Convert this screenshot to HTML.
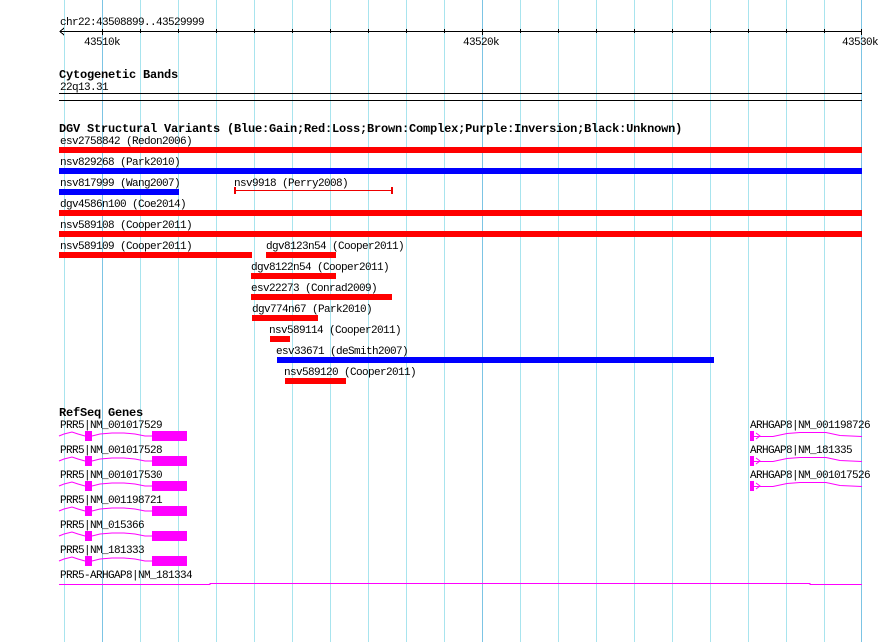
<!DOCTYPE html>
<html><head><meta charset="utf-8"><style>
html,body{margin:0;padding:0;background:#fff;width:890px;height:642px;overflow:hidden}
svg{display:block}
text{font-family:"Liberation Mono",monospace;font-size:11px;letter-spacing:-0.6px;fill:#000}
.b{font-weight:bold;font-size:12px;letter-spacing:-0.2px}
.i{fill:none;stroke:#f0f;shape-rendering:auto}
</style></head><body>
<svg width="890" height="642" xmlns="http://www.w3.org/2000/svg" shape-rendering="crispEdges">
<g stroke="#a8e4ee" stroke-width="1">
<line x1="64.5" y1="0" x2="64.5" y2="642"/>
<line x1="140.5" y1="0" x2="140.5" y2="642"/>
<line x1="178.5" y1="0" x2="178.5" y2="642"/>
<line x1="216.5" y1="0" x2="216.5" y2="642"/>
<line x1="254.5" y1="0" x2="254.5" y2="642"/>
<line x1="292.5" y1="0" x2="292.5" y2="642"/>
<line x1="330.5" y1="0" x2="330.5" y2="642"/>
<line x1="368.5" y1="0" x2="368.5" y2="642"/>
<line x1="406.5" y1="0" x2="406.5" y2="642"/>
<line x1="444.5" y1="0" x2="444.5" y2="642"/>
<line x1="520.5" y1="0" x2="520.5" y2="642"/>
<line x1="558.5" y1="0" x2="558.5" y2="642"/>
<line x1="596.5" y1="0" x2="596.5" y2="642"/>
<line x1="634.5" y1="0" x2="634.5" y2="642"/>
<line x1="672.5" y1="0" x2="672.5" y2="642"/>
<line x1="710.5" y1="0" x2="710.5" y2="642"/>
<line x1="748.5" y1="0" x2="748.5" y2="642"/>
<line x1="786.5" y1="0" x2="786.5" y2="642"/>
<line x1="824.5" y1="0" x2="824.5" y2="642"/>
</g>
<g stroke="#7cc4e4" stroke-width="1">
<line x1="102.5" y1="0" x2="102.5" y2="642"/>
<line x1="482.5" y1="0" x2="482.5" y2="642"/>
<line x1="861.5" y1="0" x2="861.5" y2="642"/>
</g>
<text x="60" y="25">chr22:43508899..43529999</text>
<g stroke="#000" stroke-width="1">
<line x1="60" y1="31.5" x2="862" y2="31.5"/>
<polyline points="64,28 60,31.5 64,35" fill="none"/>
<line x1="102.5" y1="29" x2="102.5" y2="35"/>
<line x1="140.5" y1="29" x2="140.5" y2="33"/>
<line x1="178.5" y1="29" x2="178.5" y2="33"/>
<line x1="216.5" y1="29" x2="216.5" y2="33"/>
<line x1="254.5" y1="29" x2="254.5" y2="33"/>
<line x1="292.5" y1="29" x2="292.5" y2="33"/>
<line x1="330.5" y1="29" x2="330.5" y2="33"/>
<line x1="368.5" y1="29" x2="368.5" y2="33"/>
<line x1="406.5" y1="29" x2="406.5" y2="33"/>
<line x1="444.5" y1="29" x2="444.5" y2="33"/>
<line x1="482.5" y1="29" x2="482.5" y2="35"/>
<line x1="520.5" y1="29" x2="520.5" y2="33"/>
<line x1="558.5" y1="29" x2="558.5" y2="33"/>
<line x1="596.5" y1="29" x2="596.5" y2="33"/>
<line x1="634.5" y1="29" x2="634.5" y2="33"/>
<line x1="672.5" y1="29" x2="672.5" y2="33"/>
<line x1="710.5" y1="29" x2="710.5" y2="33"/>
<line x1="748.5" y1="29" x2="748.5" y2="33"/>
<line x1="786.5" y1="29" x2="786.5" y2="33"/>
<line x1="824.5" y1="29" x2="824.5" y2="33"/>
<line x1="861.5" y1="29" x2="861.5" y2="35"/>
<line x1="59" y1="93.5" x2="862" y2="93.5"/>
<line x1="59" y1="100.5" x2="862" y2="100.5"/>
</g>
<text x="84" y="45">43510k</text>
<text x="463" y="45">43520k</text>
<text x="842" y="45">43530k</text>
<text class="b" x="59" y="78">Cytogenetic Bands</text>
<text x="60" y="90">22q13.31</text>
<text class="b" x="59" y="132">DGV Structural Variants (Blue:Gain;Red:Loss;Brown:Complex;Purple:Inversion;Black:Unknown)</text>

<text x="60" y="144">esv2758842 (Redon2006)</text>
<rect x="59" y="147" width="803" height="6" fill="#f00"/>
<text x="60" y="165">nsv829268 (Park2010)</text>
<rect x="59" y="168" width="803" height="6" fill="#00f"/>
<text x="60" y="186">nsv817999 (Wang2007)</text>
<rect x="59" y="189" width="120" height="6" fill="#00f"/>
<text x="234" y="186">nsv9918 (Perry2008)</text>
<g fill="#e00"><rect x="235" y="190" width="157" height="1"/><rect x="234" y="187" width="2" height="7"/><rect x="391" y="187" width="2" height="7"/></g>
<text x="60" y="207">dgv4586n100 (Coe2014)</text>
<rect x="59" y="210" width="803" height="6" fill="#f00"/>
<text x="60" y="228">nsv589108 (Cooper2011)</text>
<rect x="59" y="231" width="803" height="6" fill="#f00"/>
<text x="60" y="249">nsv589109 (Cooper2011)</text>
<rect x="59" y="252" width="193" height="6" fill="#f00"/>
<text x="266" y="249">dgv8123n54 (Cooper2011)</text>
<rect x="266" y="252" width="70" height="6" fill="#f00"/>
<text x="251" y="270">dgv8122n54 (Cooper2011)</text>
<rect x="251" y="273" width="85" height="6" fill="#f00"/>
<text x="251" y="291">esv22273 (Conrad2009)</text>
<rect x="251" y="294" width="141" height="6" fill="#f00"/>
<text x="252" y="312">dgv774n67 (Park2010)</text>
<rect x="252" y="315" width="66" height="6" fill="#f00"/>
<text x="269" y="333">nsv589114 (Cooper2011)</text>
<rect x="270" y="336" width="20" height="6" fill="#f00"/>
<text x="276" y="354">esv33671 (deSmith2007)</text>
<rect x="277" y="357" width="437" height="6" fill="#00f"/>
<text x="284" y="375">nsv589120 (Cooper2011)</text>
<rect x="285" y="378" width="61" height="6" fill="#f00"/>

<text class="b" x="59" y="416">RefSeq Genes</text>

<text x="60" y="428">PRR5|NM_001017529</text>
<polyline class="i" points="59,436 64,434 72,432 78,434 85,436"/>
<polyline class="i" points="92,436 100,434 112,433 124,433 135,434 145,436 152,436"/>
<rect x="85" y="431" width="7" height="10" fill="#f0f"/>
<rect x="152" y="431" width="35" height="10" fill="#f0f"/>

<text x="60" y="453">PRR5|NM_001017528</text>
<polyline class="i" points="59,461 64,459 72,457 78,459 85,461"/>
<polyline class="i" points="92,461 100,459 112,458 124,458 135,459 145,461 152,461"/>
<rect x="85" y="456" width="7" height="10" fill="#f0f"/>
<rect x="152" y="456" width="35" height="10" fill="#f0f"/>

<text x="60" y="478">PRR5|NM_001017530</text>
<polyline class="i" points="59,486 64,484 72,482 78,484 85,486"/>
<polyline class="i" points="92,486 100,484 112,483 124,483 135,484 145,486 152,486"/>
<rect x="85" y="481" width="7" height="10" fill="#f0f"/>
<rect x="152" y="481" width="35" height="10" fill="#f0f"/>

<text x="60" y="503">PRR5|NM_001198721</text>
<polyline class="i" points="59,511 64,509 72,507 78,509 85,511"/>
<polyline class="i" points="92,511 100,509 112,508 124,508 135,509 145,511 152,511"/>
<rect x="85" y="506" width="7" height="10" fill="#f0f"/>
<rect x="152" y="506" width="35" height="10" fill="#f0f"/>

<text x="60" y="528">PRR5|NM_015366</text>
<polyline class="i" points="59,536 64,534 72,532 78,534 85,536"/>
<polyline class="i" points="92,536 100,534 112,533 124,533 135,534 145,536 152,536"/>
<rect x="85" y="531" width="7" height="10" fill="#f0f"/>
<rect x="152" y="531" width="35" height="10" fill="#f0f"/>

<text x="60" y="553">PRR5|NM_181333</text>
<polyline class="i" points="59,561 64,559 72,557 78,559 85,561"/>
<polyline class="i" points="92,561 100,559 112,558 124,558 135,559 145,561 152,561"/>
<rect x="85" y="556" width="7" height="10" fill="#f0f"/>
<rect x="152" y="556" width="35" height="10" fill="#f0f"/>

<text x="60" y="578">PRR5-ARHGAP8|NM_181334</text>
<polyline points="59,584.5 210,584.5 210,583.5 810,583.5 810,584.5 862,584.5" fill="none" stroke="#f0f"/>

<text x="750" y="428">ARHGAP8|NM_001198726</text>
<rect x="750" y="431" width="4" height="10" fill="#f0f"/>
<polyline class="i" points="754,436.5 773,436.5 787,433.5 800,432.5 826,432.5 840,435.5 862,436.5"/>
<polyline class="i" points="756,433 760,436 756,439"/>

<text x="750" y="453">ARHGAP8|NM_181335</text>
<rect x="750" y="456" width="4" height="10" fill="#f0f"/>
<polyline class="i" points="754,461.5 773,461.5 787,458.5 800,457.5 826,457.5 840,460.5 862,461.5"/>
<polyline class="i" points="756,458 760,461 756,464"/>

<text x="750" y="478">ARHGAP8|NM_001017526</text>
<rect x="750" y="481" width="4" height="10" fill="#f0f"/>
<polyline class="i" points="754,486.5 773,486.5 787,483.5 800,482.5 826,482.5 840,485.5 862,486.5"/>
<polyline class="i" points="756,483 760,486 756,489"/>
</svg>
</body></html>
